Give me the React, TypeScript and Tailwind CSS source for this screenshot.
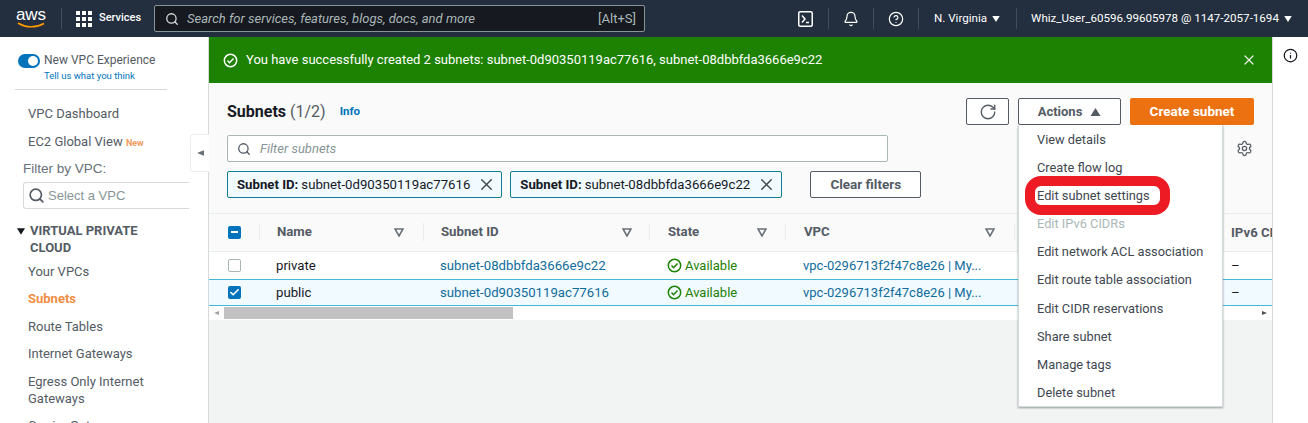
import React from "react";
import { Bell, Check, CircleHelp, Info, RotateCw, Search, Settings, X } from "lucide-react";

const sideItems = ["Your VPCs", "Subnets", "Route Tables", "Internet Gateways", "Egress Only Internet Gateways", "Carrier Gateways"];
const menuItems = [
  "View details",
  "Create flow log",
  "Edit subnet settings",
  "Edit IPv6 CIDRs",
  "Edit network ACL association",
  "Edit route table association",
  "Edit CIDR reservations",
  "Share subnet",
  "Manage tags",
  "Delete subnet"
];
const rows = [
  { name: "private", id: "subnet-08dbbfda3666e9c22", selected: false },
  { name: "public", id: "subnet-0d90350119ac77616", selected: true }
];

function CircleCheck({ className }: { className: string }) {
  return (
    <svg className={className} fill="none" stroke="currentColor" strokeWidth="1.6" viewBox="0 0 16 16">
      <circle cx="8" cy="8" r="6.6" />
      <path d="M4.8 8.1l2.2 2.2 4.2-4.4" />
    </svg>
  );
}

function SortIcon() {
  return (
    <svg className="h-[9px] w-[10px] text-[#687078]" fill="none" stroke="currentColor" strokeWidth="1.6" viewBox="0 0 10 9">
      <path d="M1 1h8L5 8z" />
    </svg>
  );
}

// filled triangle, points are given in a 10x8 box
function Triangle({ className, points }: { className: string; points: string }) {
  return (
    <svg className={className} fill="currentColor" viewBox="0 0 10 8">
      <polygon points={points} />
    </svg>
  );
}

function TerminalIcon() {
  return (
    <svg className="h-[16px] w-[15px] text-white" fill="none" stroke="currentColor" strokeWidth="1.5" viewBox="0 0 15 16">
      <rect height="14.5" rx="1.5" width="13.5" x="0.75" y="0.75" />
      <path d="M4 4.5l3 3.5-3 3.5M8 11.5h3" />
    </svg>
  );
}

function Chip({ value }: { value: string }) {
  return (
    <div className="flex h-[27px] items-center rounded-[2px] border border-[#0f7d96] bg-[#f1faff] pl-[9px] pr-[5px] text-[13.2px] text-[#16191f]">
      <span className="font-bold">Subnet ID:</span>
      <span className="ml-[3px]">{value}</span>
      <X className="ml-[7px] h-[19px] w-[19px] text-[#414750]" strokeWidth={1.8} />
    </div>
  );
}

function Header() {
  return (
    <header className="flex h-[37px] shrink-0 items-center bg-[#232f3e] text-white">
      <div className="ml-[16px] flex w-[30px] flex-col items-center">
        <span className="font-['Liberation_Sans',sans-serif] text-[17px] leading-[13px]">aws</span>
        <svg className="mt-[1px] h-[7px] w-[29px]" fill="none" viewBox="0 0 29 7">
          <path d="M1 1c8 5 18 5 26 .5" stroke="#ff9900" strokeWidth="1.6" />
        </svg>
      </div>
      <div className="ml-[15px] h-[21px] w-px bg-[#414d5c]" />
      <div className="ml-[14px] grid grid-cols-3 gap-[2px]">
        {Array.from({ length: 9 }, (_, index) => (
          <span className="h-[4px] w-[4px] bg-white" key={index} />
        ))}
      </div>
      <span className="ml-[7px] w-[41px] whitespace-nowrap text-[11px] font-medium">Services</span>
      <div className="ml-[14px] flex h-[27px] w-[491px] items-center rounded-[2px] border border-[#879596] bg-[#16191f] pl-[10px] pr-[8px] text-[13px] text-[#aab7b8]">
        <Search className="h-[14px] w-[14px] text-[#d5dbdb]" strokeWidth={2.2} />
        <span className="ml-[8px] italic">Search for services, features, blogs, docs, and more</span>
        <span className="ml-auto">[Alt+S]</span>
      </div>
      <div className="ml-[153px] flex items-center text-[11.6px]">
        <TerminalIcon />
        <div className="ml-[15px] h-[21px] w-px bg-[#414d5c]" />
        <Bell className="ml-[14px] h-[16px] w-[16px]" strokeWidth={1.8} />
        <div className="ml-[14px] h-[21px] w-px bg-[#414d5c]" />
        <CircleHelp className="ml-[14px] h-[16px] w-[16px]" strokeWidth={1.8} />
        <div className="ml-[14px] h-[21px] w-px bg-[#414d5c]" />
        <span className="ml-[15px]">N. Virginia</span>
        <Triangle className="ml-[5px] h-[6px] w-[8px]" points="0,0 10,0 5,8" />
        <div className="ml-[16px] h-[21px] w-px bg-[#414d5c]" />
        <span className="ml-[14px]">Whiz_User_60596.99605978 @ 1147-2057-1694</span>
        <Triangle className="ml-[5px] h-[6px] w-[8px]" points="0,0 10,0 5,8" />
      </div>
    </header>
  );
}

function Sidebar() {
  return (
    <aside className="w-[209px] shrink-0 overflow-hidden border-r border-[#d5dbdb] bg-white text-[13px] text-[#545b64]">
      <div className="ml-[15px] flex h-[53px] w-[152px] border-b border-[#d5dbdb] pl-[3px] pt-[17px]">
        <div className="flex h-[14px] w-[22px] items-center justify-end rounded-full bg-[#0073bb] pr-[2px]">
          <span className="h-[10px] w-[10px] rounded-full bg-white" />
        </div>
        <div className="-mt-[1px] ml-[4px] whitespace-nowrap">
          <div className="text-[12px] leading-[15px]">New VPC Experience</div>
          <div className="mt-[2px] text-[9.5px] leading-[12px] text-[#0073bb]">Tell us what you think</div>
        </div>
      </div>
      <div className="pl-[28px] pt-[14px]">
        <div className="h-[28px] leading-[19px]">VPC Dashboard</div>
        <div className="h-[28px] leading-[19px]">
          EC2 Global View <span className="text-[9px] font-bold text-[#ec7211] opacity-70">New</span>
        </div>
      </div>
      <div className="pl-[23px] font-['Liberation_Sans',sans-serif] text-[13px] text-[#687078]">
        <div className="h-[19px] text-[13.5px] leading-[17px]">Filter by VPC:</div>
        <div className="mt-[3px] flex h-[27px] w-[166px] items-center rounded-l-[3px] border border-r-0 border-[#d5dbdb] pl-[4px]">
          <Search className="h-[17px] w-[17px] text-[#545b64]" strokeWidth={2.4} />
          <span className="ml-[3px] text-[#879596]">Select a VPC</span>
        </div>
      </div>
      <div className="mt-[13px] flex pl-[17px] font-bold leading-[17px]">
        <Triangle className="mt-[6px] h-[7px] w-[8px] text-[#16191f]" points="0,0 10,0 5,8" />
        <div className="ml-[5px] w-[130px]">VIRTUAL PRIVATE CLOUD</div>
      </div>
      <ul className="mt-[7px] pl-[28px]">
        {sideItems.map((item) => (
          <li className={`w-[140px] pb-[10.4px] leading-[17px] ${item === "Subnets" ? "font-bold text-[#ec7211] opacity-80" : ""}`} key={item}>
            {item}
          </li>
        ))}
      </ul>
    </aside>
  );
}

function SubnetTable() {
  return (
    <div className="mt-[15px] overflow-hidden text-[13.2px] text-[#16191f]">
      <div className="flex h-[39px] w-[1200px] items-center border-y border-[#eaeded] bg-[#fafafa] pb-[1px] font-bold text-[#545b64]">
        <div className="flex w-[50px] shrink-0 justify-end pr-[18px]">
          <span className="flex h-[13px] w-[13px] items-center justify-center rounded-[2px] bg-[#0073bb]">
            <span className="h-[2px] w-[7px] bg-white" />
          </span>
        </div>
        <div className="flex h-[18px] w-[164px] shrink-0 items-center justify-between border-l border-[#eaeded] pl-[17px] pr-[19px]">
          Name <SortIcon />
        </div>
        <div className="flex h-[18px] w-[226px] shrink-0 items-center justify-between border-l border-[#eaeded] pl-[17px] pr-[17px]">
          Subnet ID <SortIcon />
        </div>
        <div className="flex h-[18px] w-[136px] shrink-0 items-center justify-between border-l border-[#eaeded] pl-[18px] pr-[18px]">
          State <SortIcon />
        </div>
        <div className="flex h-[18px] w-[229px] shrink-0 items-center justify-between border-l border-[#eaeded] pl-[18px] pr-[19px]">
          VPC <SortIcon />
        </div>
        <div className="h-[18px] w-[217px] shrink-0 border-l border-[#eaeded] pl-[18px]" />
        <div className="h-[18px] shrink-0 whitespace-nowrap">IPv6 CIDR</div>
      </div>
      {rows.map((row) => (
        <div
          className={`flex h-[27px] w-[1200px] items-center ${row.selected ? "border-y border-[#44b9d6] bg-[#f1faff]" : "bg-white"}`}
          key={row.name}
        >
          <div className="flex w-[50px] shrink-0 justify-end pr-[18px]">
            {row.selected ? (
              <span className="flex h-[13px] w-[13px] items-center justify-center rounded-[2px] bg-[#0073bb]">
                <Check className="h-[11px] w-[11px] text-white" strokeWidth={3.5} />
              </span>
            ) : (
              <span className="h-[13px] w-[13px] rounded-[2px] border border-[#aab7b8] bg-white" />
            )}
          </div>
          <div className="w-[164px] shrink-0 pl-[17px]">{row.name}</div>
          <div className="w-[226px] shrink-0 pl-[17px] text-[#0f6c9c]">{row.id}</div>
          <div className="flex w-[136px] shrink-0 items-center pl-[18px] text-[13px] text-[#1d8102]">
            <CircleCheck className="mr-[3px] h-[15px] w-[15px]" />
            Available
          </div>
          <div className="w-[229px] shrink-0 pl-[18px] text-[13px] text-[#0f6c9c]">vpc-0296713f2f47c8e26 | My...</div>
          <div className="w-[217px] shrink-0" />
          <div className="shrink-0">–</div>
        </div>
      ))}
      <div className="flex h-[14px] items-center bg-white">
        <Triangle className="ml-[5px] h-[6px] w-[5px] text-[#a0a0a0]" points="10,0 10,8 0,4" />
        <div className="ml-[5px] h-[12px] w-[289px] bg-[#c1c1c1]" />
        <Triangle className="ml-auto mr-[5px] h-[6px] w-[5px] text-[#505050]" points="0,0 10,4 0,8" />
      </div>
    </div>
  );
}

function ActionsMenu() {
  return (
    <div className="absolute left-[809px] top-[88px] z-10 h-[282px] w-[205px] border-x border-b border-[#d5dbdb] bg-white pt-[2px] text-[12.8px] shadow-[0_1px_2px_rgba(0,28,36,0.4)]">
      {menuItems.map((item) => (
        <div className={`h-[28.1px] whitespace-nowrap pl-[18px] leading-[26px] ${item === "Edit IPv6 CIDRs" ? "text-[#aab7b8]" : "text-[#414750]"}`} key={item}>
          {item}
        </div>
      ))}
      <div className="absolute left-[6px] top-[51px] h-[39px] w-[145px] rounded-[16px] border-[10px] border-[#ed1c24]" />
    </div>
  );
}

export default function App() {
  return (
    <div className="flex h-[423px] w-[1308px] flex-col overflow-hidden bg-white font-['Roboto','Noto_Sans',sans-serif]">
      <Header />
      <div className="flex min-h-0 flex-1">
        <Sidebar />
        <main className="relative w-[1063px] shrink-0 bg-[#f2f3f3]">
          <div className="flex h-[46px] items-center bg-[#1d8102] pl-[14px] pr-[15px] text-[13px] text-white">
            <CircleCheck className="h-[15px] w-[15px]" />
            <span className="ml-[8px]">You have successfully created 2 subnets: subnet-0d90350119ac77616, subnet-08dbbfda3666e9c22</span>
            <X className="ml-auto h-[16px] w-[16px] text-[#e6efe3]" strokeWidth={1.8} />
          </div>
          <section className="bg-[#fafafa]">
            <div className="px-[18px] pt-[15px]">
              <div className="flex h-[27px] items-center">
                <h1 className="text-[16px] font-bold text-[#16191f]">
                  Subnets <span className="font-normal text-[#545b64]">(1/2)</span>
                </h1>
                <span className="ml-[14px] text-[11.5px] font-bold text-[#0073bb]">Info</span>
                <button className="ml-auto flex h-[27px] w-[43px] items-center justify-center rounded-[2px] border border-[#545b64] bg-white" type="button">
                  <RotateCw className="h-[18px] w-[18px] text-[#545b64]" strokeWidth={1.8} />
                </button>
                <button className="ml-[9px] flex h-[27px] w-[103px] items-center justify-center rounded-[2px] border border-[#545b64] bg-white text-[13px] font-bold text-[#545b64]" type="button">
                  Actions <Triangle className="ml-[8px] h-[8px] w-[11px]" points="5,0 10,8 0,8" />
                </button>
                <button className="ml-[9px] h-[27px] w-[124px] rounded-[2px] bg-[#ec7211] text-[13.5px] font-bold text-white" type="button">
                  Create subnet
                </button>
              </div>
              <div className="mt-[10px] flex h-[27px] items-center">
                <div className="flex h-[27px] w-[661px] items-center rounded-[2px] border border-[#aab7b8] bg-white pl-[9px] text-[13px] italic text-[#879596]">
                  <Search className="h-[14px] w-[14px] text-[#545b64]" strokeWidth={2.2} />
                  <span className="ml-[9px]">Filter subnets</span>
                </div>
                <Settings className="ml-auto mr-[1px] h-[17px] w-[17px] text-[#545b64]" strokeWidth={1.8} />
              </div>
              <div className="mt-[9px] flex items-center">
                <Chip value="subnet-0d90350119ac77616" />
                <div className="ml-[8px]">
                  <Chip value="subnet-08dbbfda3666e9c22" />
                </div>
                <button className="ml-[28px] h-[27px] w-[111px] rounded-[2px] border border-[#545b64] bg-white text-[13.5px] font-bold text-[#545b64]" type="button">
                  Clear filters
                </button>
              </div>
            </div>
            <SubnetTable />
          </section>
          <ActionsMenu />
          <div className="absolute -left-[19px] top-[97px] z-10 flex h-[38px] w-[19px] items-center justify-center rounded-l-[4px] border border-r-0 border-[#eaeded] bg-white text-[#687078]">
            <Triangle className="h-[10px] w-[7px]" points="10,0 10,8 0,4" />
          </div>
        </main>
        <aside className="flex flex-1 justify-center border-l border-[#d5dbdb] bg-white pt-[11px]">
          <Info className="h-[15px] w-[15px] text-[#16191f]" strokeWidth={2} />
        </aside>
      </div>
    </div>
  );
}
